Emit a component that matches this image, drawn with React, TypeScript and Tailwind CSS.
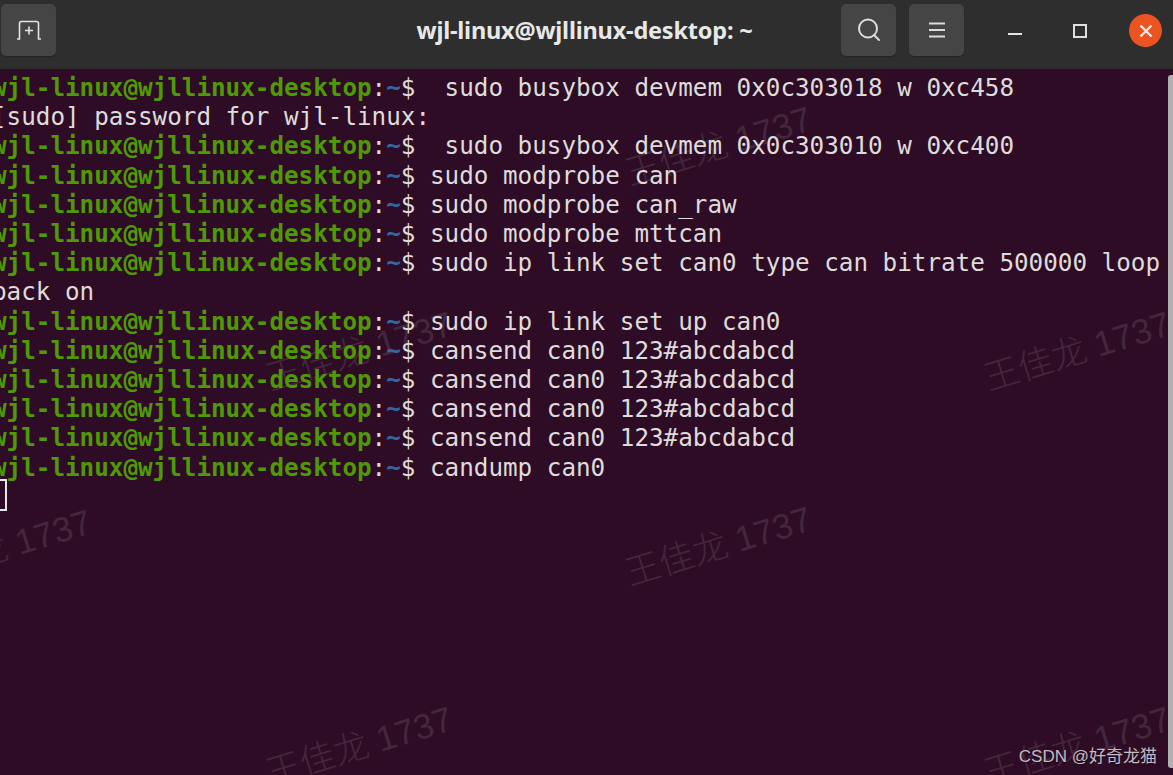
import React from "react";

const P = "wjl-linux@wjllinux-desktop";
const lines: (string | [string])[] = [
  ["  sudo busybox devmem 0x0c303018 w 0xc458"],
  "[sudo] password for wjl-linux:",
  ["  sudo busybox devmem 0x0c303010 w 0xc400"],
  [" sudo modprobe can"],
  [" sudo modprobe can_raw"],
  [" sudo modprobe mttcan"],
  [" sudo ip link set can0 type can bitrate 500000 loop"],
  "back on",
  [" sudo ip link set up can0"],
  [" cansend can0 123#abcdabcd"],
  [" cansend can0 123#abcdabcd"],
  [" cansend can0 123#abcdabcd"],
  [" cansend can0 123#abcdabcd"],
  [" candump can0"],
];

function Mark({ className }: { className: string }) {
  return (
    <div
      className={`absolute -rotate-[17deg] whitespace-nowrap text-[35px] font-light leading-[44px] text-[#43273d] font-['Liberation_Sans','Noto_Sans_CJK_SC',sans-serif] ${className}`}
    >
      王佳龙 1737
    </div>
  );
}

function HeaderButton({ children }: { children: React.ReactNode }) {
  return (
    <div className="flex h-[52px] w-[55px] shrink-0 items-center justify-center rounded-[5px] bg-[#454545] shadow-[0_1px_1px_#232323]">
      {children}
    </div>
  );
}

export default function App() {
  return (
    <div className="flex h-[775px] w-[1173px] flex-col overflow-hidden bg-[#2f0c25]">
      <header className="flex h-[69px] shrink-0 items-start bg-[#2e2e2e] pl-[1px] pt-[4px] text-[#eeeeee]">
        <div className="flex-1">
          <HeaderButton>
            <svg width="26" height="20" viewBox="0 0 26 20" fill="none" stroke="#e4e4e4" strokeWidth="1.6">
              <path d="M1 19h2.500V3.500Q3.500 1.500 5.500 1.500h15q2 0 2 2V19H25" />
              <path d="M13 6.500v8M9 10.500h8" />
            </svg>
          </HeaderButton>
        </div>
        <div className="mt-[10px] w-[344px] shrink-0 whitespace-nowrap pl-[6px] text-center text-[23.5px] font-bold leading-[32px] text-[#e8e8e8] font-['Noto_Sans',sans-serif] tracking-[-0.2px]">
          wjl-linux@wjllinux-desktop: ~
        </div>
        <div className="flex flex-1 items-start justify-end pr-[11px]">
          <div className="flex gap-[13px]">
            <HeaderButton>
              <svg width="26" height="26" viewBox="0 0 26 26" fill="none" stroke="#dcdcdc" strokeWidth="2">
                <circle cx="12" cy="11.500" r="9" />
                <path d="M18 18l5 5" strokeLinecap="round" />
              </svg>
            </HeaderButton>
            <HeaderButton>
              <svg width="18" height="16" viewBox="0 0 18 16" fill="none" stroke="#dcdcdc" strokeWidth="2">
                <path d="M1 1.500h16M1 8h16M1 14.500h16" />
              </svg>
            </HeaderButton>
          </div>
          <div className="ml-[44px] mt-[29px] h-[2px] w-[14px] bg-[#e4e4e4]" />
          <div className="ml-[51px] mt-[20px] h-[14px] w-[14px] border-2 border-[#e0e0e0]" />
          <div className="ml-[42px] mt-[10px] flex h-[33px] w-[33px] items-center justify-center rounded-full bg-[#e95420]">
            <svg width="14" height="14" viewBox="0 0 14 14" fill="none" stroke="#fbe6dc" strokeWidth="2.400">
              <path d="M1.500 1.500l11 11M12.500 1.500l-11 11" />
            </svg>
          </div>
        </div>
      </header>

      <main className="relative flex-1 overflow-hidden bg-[#2f0c25] pt-[4px] font-['DejaVu_Sans_Mono','Liberation_Mono',monospace] text-[24.25px] leading-[29.2px]">
        <Mark className="left-[622px] top-[55px]" />
        <Mark className="left-[981px] top-[260px]" />
        <Mark className="left-[263px] top-[260px]" />
        <Mark className="left-[622px] top-[455px]" />
        <Mark className="left-[-98px] top-[458px]" />
        <Mark className="left-[263px] top-[655px]" />
        <Mark className="left-[981px] top-[655px]" />

        <div className="relative -ml-2 whitespace-pre">
          {lines.map((l, i) =>
            typeof l === "string" ? (
              <div key={i} className="text-[#dedcdb]">{l}</div>
            ) : (
              <div key={i} className="text-[#dedcdb]">
                <span className="font-bold text-[#4e9a06]">{P}</span>
                <span>:</span>
                <span className="font-bold text-[#3465a4]">~</span>
                <span>$</span>
                {l[0]}
              </div>
            ),
          )}
          <div className="-mt-[3px] ml-[1px] h-[32px] w-[14px] border-2 border-[#e8e8e8]" />
        </div>

        <div className="absolute bottom-[7px] right-0 top-[6px] w-[5px] rounded-l-[3px] bg-[#b3aeb1]" />
        <div className="absolute bottom-[7px] right-[16px] whitespace-nowrap text-[17px] leading-[22px] text-[#c4bcc2] [text-shadow:0_1px_1px_#1a0514] font-['Liberation_Sans','Noto_Sans_CJK_SC',sans-serif]">
          CSDN @好奇龙猫
        </div>
      </main>
    </div>
  );
}
